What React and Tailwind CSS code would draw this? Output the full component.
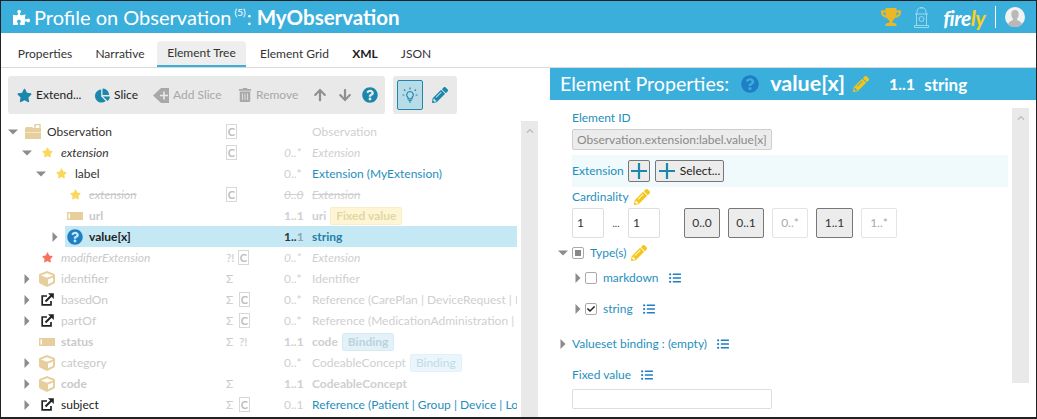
import React from "react";
import {
  FaPuzzlePiece, FaTrophy, FaStar, FaChartPie, FaTrashAlt, FaArrowUp, FaArrowDown,
  FaQuestionCircle, FaPencilAlt, FaCube, FaListUl, FaCheck, FaChevronUp,
} from "react-icons/fa";

const TAN = "#e6cf9c";
const LEVEL = ["w-[22px]", "w-[36px]", "w-[50px]", "w-[64px]"];
const FADED = "text-[#cfcfcf]";

function Tri({ open, className = "" }) {
  return (
    <svg width="10" height="10" viewBox="0 0 10 10" className={className}>
      {open ? <path d="M0 2.5h10L5 7.5z" fill="#8c8c8c" /> : <path d="M2.5 0v10L7.5 5z" fill="#8c8c8c" />}
    </svg>
  );
}

function Folder() {
  return (
    <svg width="16" height="16" viewBox="0 0 16 16">
      <path d="M0 4.5 1 3h6l1 1h8v11H0z" fill={TAN} />
      <rect x="10" y="0.5" width="5" height="6" fill="none" stroke={TAN} strokeWidth="1.4" />
      <rect x="0" y="8" width="16" height="1" fill="#f3e7cc" />
    </svg>
  );
}

function Slot() {
  return (
    <svg width="16" height="8" viewBox="0 0 16 8">
      <rect width="16" height="8" fill={TAN} />
      <rect x="1.5" y="1.5" width="1.5" height="5" fill="#fff" />
    </svg>
  );
}

function Share() {
  return (
    <svg width="13" height="13" viewBox="0 0 13 13" fill="none" stroke="#222">
      <path d="M6 3H1.2v8.8H10V8" strokeWidth="1.7" />
      <path d="M4.5 8.5 10.5 2.5" strokeWidth="1.9" />
      <path d="M7 .2h5.8V6z" fill="#222" stroke="none" />
    </svg>
  );
}

function AddSlice() {
  return (
    <svg width="16" height="15" viewBox="0 0 16 15">
      <path d="M16 0v15H8L0 7.5 8 0z" fill="#a8a8a8" />
      <path d="M11 3.5v8M7 7.5h8" stroke="#e9e9e9" strokeWidth="1.6" />
    </svg>
  );
}

function Bulb() {
  return (
    <svg width="16" height="16" viewBox="0 0 16 16" fill="none" stroke="#1b87ad" strokeWidth="1.2">
      <path d="M8 4.5a3.400 3.400 0 0 0-2 6.100v1.200h4v-1.200a3.400 3.400 0 0 0-2-6.100z" />
      <path d="M6.500 13.500h3M7 15h2M8 .5v2M2 2.500l1.300 1.300M14 2.500l-1.300 1.300M.5 8h1.800M13.700 8h1.800" />
    </svg>
  );
}

function Hydrant() {
  return (
    <svg width="15" height="21" viewBox="0 0 15 21" fill="none" stroke="#a6dcef" strokeWidth="0.9">
      <path d="M3 7V4.500a4.500 4 0 0 1 9 0V7M1 7h13M2.500 7v11M12.500 7v11M0.500 18.500h14v2H.5z" />
      <circle cx="7.500" cy="12" r="2.500" />
      <path d="M6 1h3" />
    </svg>
  );
}

function Avatar() {
  return (
    <svg width="20" height="20" viewBox="0 0 20 20">
      <circle cx="10" cy="10" r="10" fill="#f2f2f2" />
      <path d="M3 17.500c.5-3 3.500-3.600 5-4.400v-1.400C6.700 10.500 6.300 8.700 6.300 7c0-2.500 1.500-4 3.700-4s3.700 1.500 3.700 4c0 1.700-.4 3.500-1.700 4.700v1.400c1.500.8 4.500 1.400 5 4.400A10 10 0 0 1 3 17.500z" fill="#b9b9b9" />
    </svg>
  );
}

function ThinPlus() {
  return (
    <svg width="16" height="16" viewBox="0 0 16 16" stroke="#1b87ad" strokeWidth="2.2">
      <path d="M8 0v16M0 8h16" />
    </svg>
  );
}

function Pencil({ size = 16, className = "text-[#f5c518]" }) {
  return <FaPencilAlt size={size} className={className} />;
}

function Flag({ c, sigma, q, blank }) {
  return (
    <span className="flex items-center text-[#c9c9c9]">
      {sigma && <span className="w-[13px]">Σ</span>}
      {q && <span className="w-[12px]">?!</span>}
      {c && (
        <span className="flex h-[15px] w-[11px] items-center justify-center border border-[#d8d8d8] text-[11px] font-bold leading-none text-[#bdbdbd]">
          {blank ? "" : "C"}
        </span>
      )}
    </span>
  );
}

const star = (cls) => <FaStar size={11} className={cls} />;
const cube = <FaCube size={16} color={TAN} />;
const share = <Share />;
const slot = <Slot />;
const Y = "text-[#fbd75b]";

const rows = [
  { lv: 0, arrow: "open", icon: <Folder />, name: "Observation", nameCls: "text-[#333]", c: 1, type: "Observation" },
  { lv: 1, arrow: "open", icon: star(Y), name: "extension", nameCls: "italic text-[#333]", c: 1, card: "0..*", cardCls: "italic", type: "Extension", typeCls: `italic ${FADED}` },
  { lv: 2, arrow: "open", icon: star(Y), name: "label", nameCls: "text-[#333]", card: "0..*", type: "Extension (MyExtension)", typeCls: "text-[#1f8fbd]" },
  { lv: 3, icon: star(Y), name: "extension", nameCls: "italic line-through text-[#c9c9c9]", c: 1, card: "0..0", cardCls: "italic line-through", type: "Extension", typeCls: `italic line-through ${FADED}` },
  { lv: 3, icon: slot, name: "url", nameCls: "font-bold text-[#c9c9c9]", card: "1..1", cardCls: "font-bold", type: "uri", typeCls: `font-bold ${FADED}`, badge: "Fixed value", badgeCls: "bg-[#fdf5d3] border-[#f7eec8] font-bold text-[#e3d7a5]" },
  { lv: 3, arrow: "closed", icon: <FaQuestionCircle size={16} className="text-[#1f7fc4]" />, name: "value[x]", nameCls: "font-bold text-[#222]", card: <><span className="text-[#333]">1..</span><span className="text-[#8aa7b1]">1</span></>, cardCls: "font-bold", type: "string", typeCls: "font-bold text-[#1f7fa8]", selected: 1 },
  { lv: 1, icon: star("text-[#f87060]"), name: "modifierExtension", nameCls: "italic text-[#c9c9c9]", q: 1, c: 1, card: "0..*", cardCls: "italic", type: "Extension", typeCls: `italic ${FADED}` },
  { lv: 1, arrow: "closed", icon: cube, name: "identifier", sigma: 1, card: "0..*", type: "Identifier" },
  { lv: 1, arrow: "closed", icon: share, name: "basedOn", sigma: 1, c: 1, card: "0..*", type: "Reference (CarePlan | DeviceRequest | I" },
  { lv: 1, arrow: "closed", icon: share, name: "partOf", sigma: 1, c: 1, card: "0..*", type: "Reference (MedicationAdministration |" },
  { lv: 1, icon: slot, name: "status", nameCls: "font-bold text-[#c9c9c9]", sigma: 1, q: 1, card: "1..1", cardCls: "font-bold", type: "code", typeCls: `font-bold ${FADED}`, badge: "Binding", badgeCls: "bg-[#e2f2f8] border-[#d5ebf3] font-bold text-[#bcd3dc]" },
  { lv: 1, arrow: "closed", icon: cube, name: "category", card: "0..*", type: "CodeableConcept", badge: "Binding", badgeCls: "bg-[#eaf6fb] border-[#e1f1f7] text-[#bfdbe6]" },
  { lv: 1, arrow: "closed", icon: cube, name: "code", nameCls: "font-bold text-[#c9c9c9]", sigma: 1, card: "1..1", cardCls: "font-bold", type: "CodeableConcept", typeCls: `font-bold ${FADED}` },
  { lv: 1, arrow: "closed", icon: share, name: "subject", nameCls: "text-[#222]", sigma: 1, c: 1, card: "0..1", type: "Reference (Patient | Group | Device | Lo", typeCls: "text-[#1f8fbd]" },
  { lv: 1, name: "", c: 1, blank: 1 },
];

function TreeRow({ r }) {
  return (
    <div className="flex h-[21px] shrink-0 items-center">
      <div className={`${LEVEL[r.lv]} flex h-full shrink-0 items-center justify-end pr-[5px]`}>
        {r.arrow && <Tri open={r.arrow === "open"} />}
      </div>
      <div className={`flex h-full min-w-0 flex-1 items-center ${r.selected ? "bg-[#c5e9f4]" : ""}`}>
        <div className="flex min-w-0 flex-1 items-center pl-[2px]">
          <span className="flex w-[16px] shrink-0 items-center justify-center">{r.icon}</span>
          <span className={`ml-[6px] whitespace-nowrap ${r.nameCls || "text-[#c9c9c9]"}`}>{r.name}</span>
        </div>
        <div className="flex w-[58px] shrink-0 items-center">
          <Flag c={r.c} sigma={r.sigma} q={r.q} blank={r.blank} />
        </div>
        <div className={`w-[28px] shrink-0 whitespace-nowrap ${r.cardCls || ""} ${FADED}`}>{r.card}</div>
        <div className="flex w-[205px] shrink-0 items-center overflow-hidden whitespace-nowrap">
          <span className={r.typeCls || FADED}>{r.type}</span>
          {r.badge && (
            <span className={`ml-[4px] rounded-[2px] border px-[5px] leading-[16px] ${r.badgeCls}`}>{r.badge}</span>
          )}
        </div>
      </div>
    </div>
  );
}

function ToolBtn({ icon, label, muted, className = "" }) {
  return (
    <div className={`flex items-center gap-[4px] ${muted ? "text-[#a8a8a8]" : "text-[#222]"} ${className}`}>
      {icon}
      {label && <span>{label}</span>}
    </div>
  );
}

function CardBtn({ label, on, w = "w-[36px]" }) {
  return (
    <div
      className={`flex h-[30px] ${w} items-center justify-center rounded-[2px] ${
        on ? "border border-[#777] bg-[#ececec] text-[#333]" : "border border-[#e4e4e4] bg-white text-[#a9a9a9]"
      }`}
    >
      {label}
    </div>
  );
}

function ListIcon({ className = "" }) {
  return <FaListUl size={12} className={`text-[#1f7fc4] ${className}`} />;
}

function Box({ checked }) {
  return (
    <span className="flex h-[12px] w-[12px] items-center justify-center rounded-[2px] border border-[#aaa] bg-white">
      {checked && <FaCheck size={8} className="text-[#222]" />}
    </span>
  );
}

const tabs = [
  { t: "Properties", w: "w-[76px]" },
  { t: "Narrative", w: "w-[74px]" },
  { t: "Element Tree", w: "w-[89px]", active: 1 },
  { t: "Element Grid", w: "w-[97px]" },
  { t: "XML", w: "w-[44px]", bold: 1 },
  { t: "JSON", w: "w-[58px]" },
];

export default function App() {
  return (
    <div className="box-border flex h-[419px] w-[1037px] flex-col overflow-hidden border border-b-2 border-[#222] bg-white font-['Lato',sans-serif] text-[12px] text-[#333]">
      <header className="flex h-[32px] shrink-0 items-center bg-[#3bafdc] pl-[12px] pr-[11px] text-white">
        <FaPuzzlePiece size={17} />
        <span className="ml-[4px] text-[20px] leading-none">Profile on Observation</span>
        <sup className="ml-[3px] text-[10px]">(5)</sup>
        <span className="ml-[1px] text-[20px] leading-none">:</span>
        <span className="ml-[5px] text-[20.5px] font-bold leading-none">MyObservation</span>
        <div className="ml-auto flex items-center">
          <FaTrophy size={20} className="text-[#e8b829]" />
          <span className="ml-[13px] flex"><Hydrant /></span>
          <span className="ml-[14px] text-[21px] font-bold italic leading-none tracking-[-0.5px]">
            fire<span className="text-[#fcd116]">ly</span>
          </span>
          <span className="ml-[10px] h-[22px] w-px bg-white" />
          <span className="ml-[9px] flex"><Avatar /></span>
        </div>
      </header>

      <nav className="flex h-[35px] shrink-0 items-end border-b border-[#d9d9d9] pl-[6px]">
        {tabs.map((t) => (
          <div
            key={t.t}
            className={`flex h-[26px] ${t.w} items-center justify-center whitespace-nowrap ${
              t.active ? "rounded-t-[4px] border-b-2 border-[#3bafdc] bg-[#eeeeee]" : ""
            } ${t.bold ? "font-bold text-[#222]" : ""}`}
          >
            {t.t}
          </div>
        ))}
      </nav>

      <div className="flex min-h-0 flex-1">
        <section className="flex w-[549px] shrink-0 flex-col">
          <div className="flex shrink-0 gap-[8px] pl-[7px] pt-[8px]">
            <div className="flex h-[38px] w-[377px] items-center rounded-[3px] bg-[#e9e9e9] pl-[9px]">
              <ToolBtn icon={<FaStar size={15} className="text-[#1b87ad]" />} label="Extend..." className="w-[78px]" />
              <ToolBtn icon={<FaChartPie size={15} className="text-[#1b87ad]" />} label="Slice" className="w-[58px]" />
              <ToolBtn icon={<AddSlice />} label="Add Slice" muted className="w-[85px]" />
              <ToolBtn icon={<FaTrashAlt size={14} className="text-[#a8a8a8]" />} label="Remove" muted className="w-[75px]" />
              <FaArrowUp size={14} className="text-[#8f8f8f]" />
              <FaArrowDown size={14} className="ml-[11px] text-[#8f8f8f]" />
              <FaQuestionCircle size={16} className="ml-[10px] text-[#1b87ad]" />
            </div>
            <div className="flex h-[38px] w-[64px] items-center rounded-[3px] bg-[#e9e9e9] pl-[4px]">
              <span className="flex h-[30px] w-[26px] items-center justify-center rounded-[2px] border border-[#1b87ad] bg-[#b8dbe8]">
                <Bulb />
              </span>
              <FaPencilAlt size={16} className="ml-[9px] text-[#1b87ad]" />
            </div>
          </div>

          <div className="mt-[7px] flex min-h-0 flex-1">
            <div className="flex min-h-0 w-[516px] flex-col overflow-hidden">
              {rows.map((r, i) => <TreeRow key={i} r={r} />)}
            </div>
            <div className="ml-[4px] flex w-[17px] justify-center bg-[#e9e9e9] pt-[6px]">
              <FaChevronUp size={8} className="text-[#bbb]" />
            </div>
          </div>
        </section>

        <section className="flex min-w-0 flex-1 flex-col">
          <div className="flex h-[32px] shrink-0 items-center bg-[#3bafdc] pl-[10px] text-white">
            <span className="text-[19.6px] leading-none">Element Properties:</span>
            <FaQuestionCircle size={18} className="ml-[12px] text-[#1f7fc4]" />
            <span className="ml-[11px] text-[21.5px] font-bold leading-none">value[x]</span>
            <Pencil className="ml-[8px] text-[#f5c518]" />
            <span className="ml-[20px] text-[16px] font-bold leading-none">1..1</span>
            <span className="ml-[9px] text-[17px] font-bold leading-none">string</span>
          </div>

          <div className="flex min-h-0 flex-1">
            <div className="w-[458px] shrink-0 pl-[22px] text-[#1f8fbd]">
              <div className="flex h-[27px] items-end leading-[18px]">Element ID</div>
              <div className="mt-[2px] flex h-[21px] w-[200px] items-center rounded-[2px] border border-[#cfcfcf] bg-[#ececec] pl-[4px] text-[#8a8a8a]">
                Observation.extension:label.value[x]
              </div>
              <div className="mt-[5px] flex h-[32px] items-center bg-[#f0f9fc]">
                <span className="w-[56px]">Extension</span>
                <span className="flex h-[22px] w-[22px] items-center justify-center rounded-[2px] border border-[#777] bg-[#ececec]">
                  <ThinPlus />
                </span>
                <span className="ml-[5px] flex h-[22px] w-[69px] items-center justify-center gap-[5px] rounded-[2px] border border-[#777] bg-[#ececec] text-[#222]">
                  <ThinPlus />
                  Select...
                </span>
              </div>
              <div className="flex h-[20px] items-center gap-[5px]">
                Cardinality <Pencil />
              </div>
              <div className="mt-[1px] flex items-center text-[#333]">
                <div className="flex h-[30px] w-[32px] items-center rounded-[2px] border border-[#ddd] pl-[4px]">1</div>
                <span className="w-[24px] text-center text-[10px]">...</span>
                <div className="flex h-[30px] w-[32px] items-center rounded-[2px] border border-[#ddd] pl-[4px]">1</div>
                <div className="ml-[24px] flex gap-[8px]">
                  <CardBtn label="0..0" on />
                  <CardBtn label="0..1" on />
                  <CardBtn label="0..*" />
                  <CardBtn label="1..1" on w="w-[37px]" />
                  <CardBtn label="1..*" />
                </div>
              </div>
              <div className="-ml-[14px] mt-[5px] flex h-[20px] items-center">
                <Tri open />
                <span className="ml-[4px] flex h-[12px] w-[12px] items-center justify-center rounded-[2px] border border-[#aaa]">
                  <span className="h-[6px] w-[6px] bg-[#888]" />
                </span>
                <span className="ml-[6px]">Type(s)</span>
                <Pencil className="ml-[5px] text-[#f5c518]" />
              </div>
              <div className="mt-[5px] flex h-[20px] items-center pl-[1px]">
                <Tri />
                <span className="ml-[2px]"><Box /></span>
                <span className="ml-[6px]">markdown</span>
                <ListIcon className="ml-[10px]" />
              </div>
              <div className="mt-[11px] flex h-[20px] items-center pl-[1px]">
                <Tri />
                <span className="ml-[2px]"><Box checked /></span>
                <span className="ml-[6px]">string</span>
                <ListIcon className="ml-[10px]" />
              </div>
              <div className="-ml-[14px] mt-[15px] flex h-[20px] items-center">
                <Tri />
                <span className="ml-[4px]">Valueset binding : (empty)</span>
                <ListIcon className="ml-[10px]" />
              </div>
              <div className="mt-[11px] flex h-[20px] items-center">
                Fixed value
                <ListIcon className="ml-[10px]" />
              </div>
              <div className="mt-[4px] h-[20px] w-[200px] rounded-[2px] border border-[#ddd]" />
            </div>
            <div className="ml-[4px] mt-[8px] flex h-[275px] w-[17px] justify-center bg-[#e9e9e9] pt-[6px]">
              <FaChevronUp size={8} className="text-[#bbb]" />
            </div>
          </div>
        </section>
      </div>
    </div>
  );
}
